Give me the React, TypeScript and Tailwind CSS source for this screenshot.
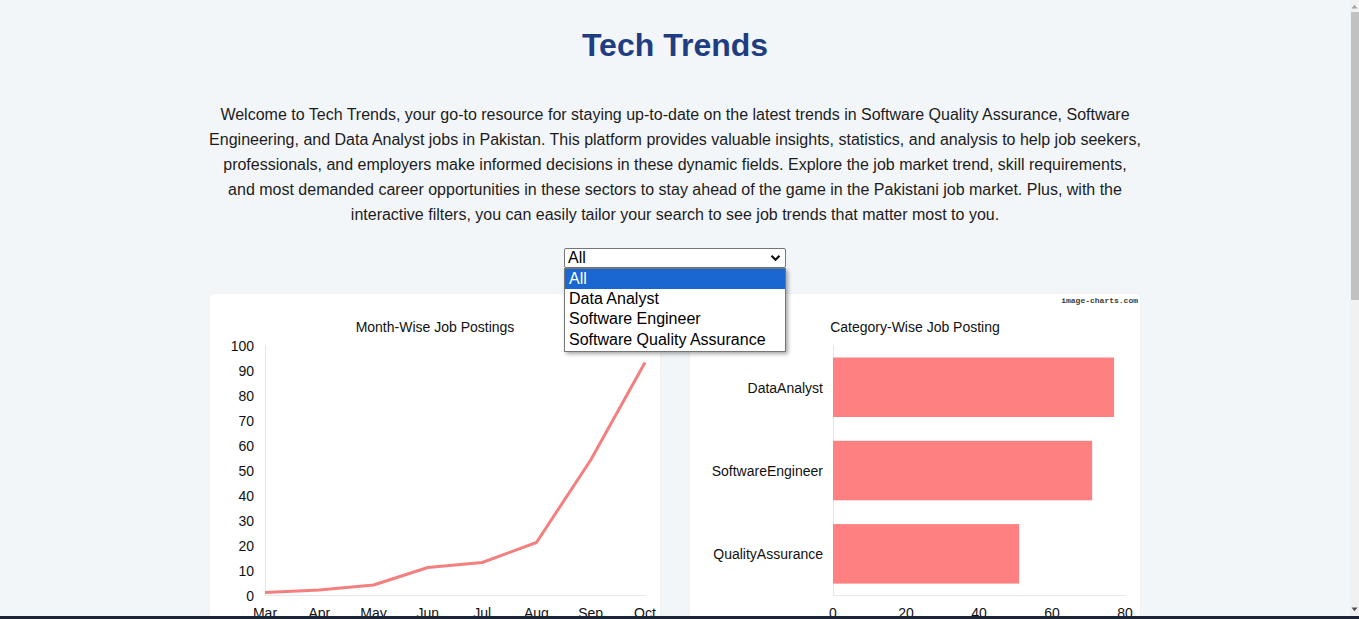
const months = ["Mar", "Apr", "May", "Jun", "Jul", "Aug", "Sep", "Oct"];
const monthly = [1, 2, 4, 11, 13, 21, 54, 93];

const categories = [
  { name: "DataAnalyst", value: 77 },
  { name: "SoftwareEngineer", value: 71 },
  { name: "QualityAssurance", value: 51 },
];

const options = ["All", "Data Analyst", "Software Engineer", "Software Quality Assurance"];

const chartFont = "'Liberation Sans', Arial, sans-serif";

function Watermark() {
  return (
    <text
      x={448}
      y={9}
      textAnchor="end"
      fontSize={8}
      fontWeight={700}
      fill="#3a3a3a"
      fontFamily="'Liberation Mono', 'DejaVu Sans Mono', monospace"
    >
      image-charts.com
    </text>
  );
}

function LineChart() {
  const x = (i: number) => 55 + i * (380 / 7);
  const y = (v: number) => 301 - v * 2.5;
  const points = monthly.map((v, i) => `${x(i)},${y(v)}`).join(" ");

  return (
    <svg width={450} height={420} fontFamily={chartFont}>
      <Watermark />
      <text x={225} y={38} textAnchor="middle" fontSize={14} fill="#111">
        Month-Wise Job Postings
      </text>
      <line x1={55.5} y1={51} x2={55.5} y2={301} stroke="#e8e8e8" />
      <line x1={55} y1={301.5} x2={436} y2={301.5} stroke="#e8e8e8" />
      {[0, 10, 20, 30, 40, 50, 60, 70, 80, 90, 100].map((v) => (
        <text key={v} x={44} y={y(v) + 6} textAnchor="end" fontSize={14} fill="#111">
          {v}
        </text>
      ))}
      {months.map((m, i) => (
        <text key={m} x={x(i)} y={324} textAnchor="middle" fontSize={14} fill="#111">
          {m}
        </text>
      ))}
      <polyline points={points} fill="none" stroke="#f47f7f" strokeWidth={3} strokeLinejoin="round" />
    </svg>
  );
}

function BarChart() {
  const x = (v: number) => 143 + v * 3.65;

  return (
    <svg width={450} height={420} fontFamily={chartFont}>
      <Watermark />
      <text x={225} y={38} textAnchor="middle" fontSize={14} fill="#111">
        Category-Wise Job Posting
      </text>
      <line x1={143.5} y1={51} x2={143.5} y2={301} stroke="#e8e8e8" />
      <line x1={143} y1={301.5} x2={436} y2={301.5} stroke="#e8e8e8" />
      {categories.map((c, i) => {
        const top = 63.5 + i * 83.3;
        return (
          <g key={c.name}>
            <rect x={143} y={top} width={x(c.value) - 143} height={59.5} fill="#ff8080" />
            <text x={133} y={top + 35} textAnchor="end" fontSize={14} fill="#111">
              {c.name}
            </text>
          </g>
        );
      })}
      {[0, 20, 40, 60, 80].map((v) => (
        <text key={v} x={x(v)} y={324} textAnchor="middle" fontSize={14} fill="#111">
          {v}
        </text>
      ))}
    </svg>
  );
}

function FilterSelect() {
  return (
    <div className="relative w-[222px]">
      <div className="flex h-5 items-center justify-between rounded-[2px] border border-[#767676] bg-white pl-[3px] pr-[4px] text-base leading-5 text-black">
        <span>All</span>
        <svg width="11" height="8" viewBox="0 0 11 8">
          <path d="M1.5 1.8 L5.5 5.8 L9.5 1.8" fill="none" stroke="#111" strokeWidth="2.2" />
        </svg>
      </div>
      <ul className="absolute left-0 top-5 z-10 w-full border border-[#767676] bg-white pb-[1px] shadow-[2px_2px_4px_rgba(0,0,0,0.35)]">
        {options.map((o, i) => (
          <li
            key={o}
            className={
              i === 0
                ? "h-5 bg-[#1a67d2] pl-1 text-base leading-5 text-white"
                : "h-[20.3px] pl-1 text-base leading-5 text-black"
            }
          >
            {o}
          </li>
        ))}
      </ul>
    </div>
  );
}

function Scrollbar() {
  return (
    <div className="flex w-[9px] flex-col bg-[#f1f1f1]">
      <div className="flex h-[12px] items-center justify-center">
        <svg width="7" height="5" viewBox="0 0 7 5">
          <path d="M0.5 4.5 L3.5 0.8 L6.5 4.5 Z" fill="#a3a3a3" />
        </svg>
      </div>
      <div className="ml-[1px] h-[288px] bg-[#c1c1c1]" />
      <div className="flex-1" />
      <div className="flex h-[14px] items-center justify-center">
        <svg width="7" height="5" viewBox="0 0 7 5">
          <path d="M0.5 0.5 L3.5 4.2 L6.5 0.5 Z" fill="#505050" />
        </svg>
      </div>
    </div>
  );
}

export default function App() {
  return (
    <div className="flex h-[619px] flex-col overflow-hidden bg-[#f3f6f9] font-['Liberation_Sans',Arial,sans-serif]">
      <div className="flex min-h-0 flex-1">
        <main className="min-w-0 flex-1 overflow-hidden">
          <h1 className="pt-[27px] text-center text-[32px] font-bold leading-[37px] text-[#1f3d82]">
            Tech Trends
          </h1>
          <p className="mx-auto mt-[38px] w-[932px] text-center text-base leading-[25px] text-[#1c1c1c]">
            Welcome to Tech Trends, your go-to resource for staying up-to-date on the latest trends in Software
            Quality Assurance, Software Engineering, and Data Analyst jobs in Pakistan. This platform provides
            valuable insights, statistics, and analysis to help job seekers, professionals, and employers make
            informed decisions in these dynamic fields. Explore the job market trend, skill requirements, and most
            demanded career opportunities in these sectors to stay ahead of the game in the Pakistani job market.
            Plus, with the interactive filters, you can easily tailor your search to see job trends that matter most
            to you.
          </p>
          <div className="mt-[21px] flex justify-center">
            <FilterSelect />
          </div>
          <div className="mt-[26px] flex justify-center gap-[30px]">
            <div className="w-[450px] rounded-sm bg-white shadow-[0_0_3px_rgba(0,0,0,0.04)]">
              <LineChart />
            </div>
            <div className="w-[450px] rounded-sm bg-white shadow-[0_0_3px_rgba(0,0,0,0.04)]">
              <BarChart />
            </div>
          </div>
        </main>
        <Scrollbar />
      </div>
      <div className="h-[3px] bg-[#1c2535]" />
    </div>
  );
}
